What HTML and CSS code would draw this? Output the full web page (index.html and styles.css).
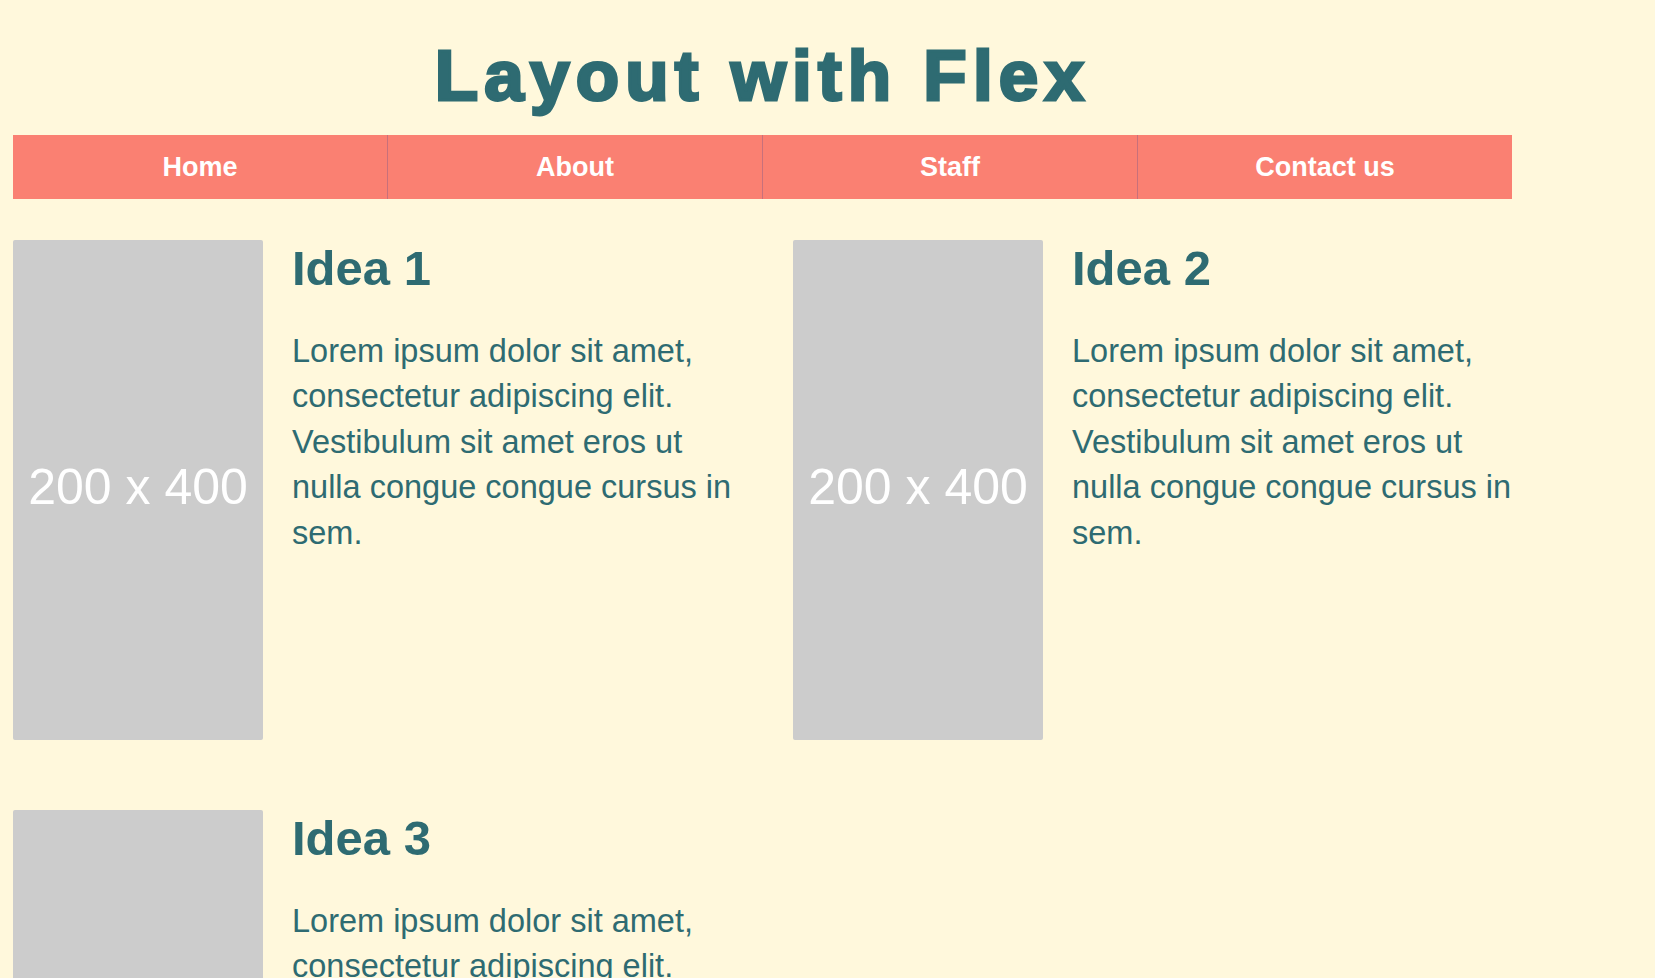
FILE: index.html
```html
<!DOCTYPE html>
<html lang="en">
<head>
<meta charset="utf-8">
<title>Layout with Flex</title>
<link rel="stylesheet" href="styles.css">
</head>
<body>
<div class="page">
  <h1 class="title">Layout with Flex</h1>
  <nav class="nav">
    <a class="nav-item" href="#">Home</a>
    <a class="nav-item" href="#">About</a>
    <a class="nav-item" href="#">Staff</a>
    <a class="nav-item" href="#">Contact us</a>
  </nav>
  <main class="ideas">
    <section class="idea">
      <div class="placeholder">200 x 400</div>
      <div class="idea-text">
        <h2 class="idea-title">Idea 1</h2>
        <p class="idea-body">Lorem ipsum dolor sit amet, consectetur adipiscing elit. Vestibulum sit amet eros ut nulla congue congue cursus in sem.</p>
      </div>
    </section>
    <section class="idea">
      <div class="placeholder">200 x 400</div>
      <div class="idea-text">
        <h2 class="idea-title">Idea 2</h2>
        <p class="idea-body">Lorem ipsum dolor sit amet, consectetur adipiscing elit. Vestibulum sit amet eros ut nulla congue congue cursus in sem.</p>
      </div>
    </section>
    <section class="idea">
      <div class="placeholder">200 x 400</div>
      <div class="idea-text">
        <h2 class="idea-title">Idea 3</h2>
        <p class="idea-body">Lorem ipsum dolor sit amet, consectetur adipiscing elit. Vestibulum sit amet eros ut nulla congue congue cursus in sem.</p>
      </div>
    </section>
  </main>
</div>
</body>
</html>
```
FILE: styles.css
```css
html, body {
  margin: 0;
  padding: 0;
  background: #fff8dc;
}

body {
  font-family: "Liberation Sans", Arial, sans-serif;
  color: #2e6b72;
}

.page {
  width: 1499px;
  margin-left: 13px;
  padding-bottom: 40px;
}

.title {
  margin: 31px 0 14px;
  font-size: 71px;
  line-height: 90px;
  font-weight: 700;
  letter-spacing: 6.2px;
  text-align: center;
  color: #2e6b72;
  -webkit-text-stroke: 3px #2e6b72;
}

.nav {
  display: flex;
  height: 64px;
  background: #fa8072;
}

.nav-item {
  flex: 1;
  display: flex;
  align-items: center;
  justify-content: center;
  color: #ffffff;
  font-size: 27px;
  font-weight: 700;
  text-decoration: none;
}

.nav-item + .nav-item {
  border-left: 1px solid #c8707b;
}

.ideas {
  display: grid;
  grid-template-columns: 733px 733px;
  column-gap: 47px;
  row-gap: 70px;
  margin-top: 41px;
}

.idea {
  display: flex;
  align-items: flex-start;
  gap: 29px;
}

.placeholder {
  flex: 0 0 250px;
  width: 250px;
  height: 500px;
  box-sizing: border-box;
  padding-bottom: 6px;
  background: #cccccc;
  border-radius: 2px;
  display: flex;
  align-items: center;
  justify-content: center;
  color: #ffffff;
  font-size: 50px;
  white-space: nowrap;
}

.idea-text {
  width: 454px;
}

.idea-title {
  margin: 0 0 33px;
  font-size: 49px;
  line-height: 56px;
  font-weight: 700;
}

.idea-body {
  margin: 0;
  font-size: 32.5px;
  line-height: 45.4px;
}
```
